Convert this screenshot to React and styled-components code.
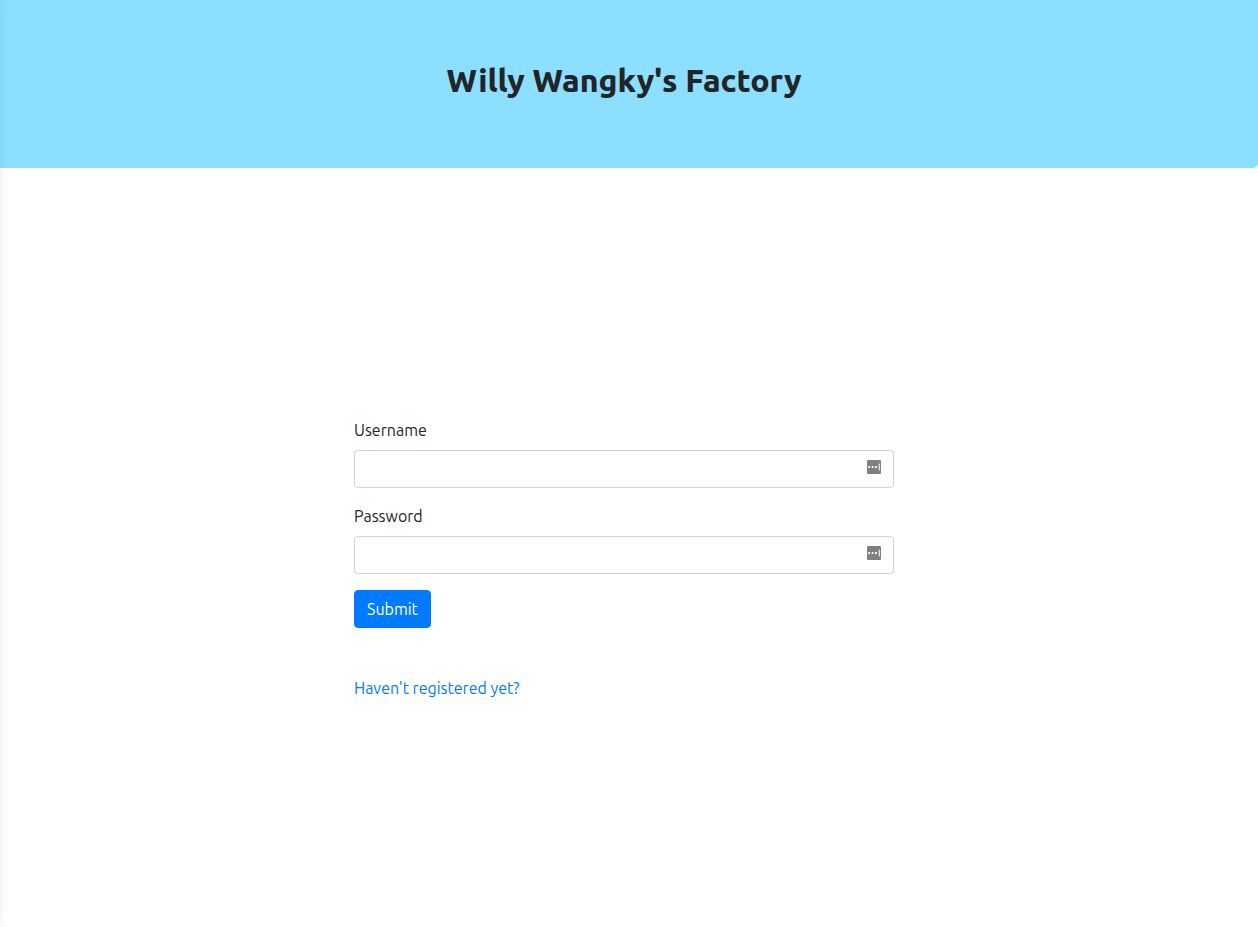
import React from "react";
import styled, { createGlobalStyle } from "styled-components";

const GlobalStyle = createGlobalStyle`
  *, *::before, *::after { box-sizing: border-box; }
  body {
    margin: 0;
    background: #fff;
    color: #212529;
    font-family: Ubuntu, "Noto Sans", sans-serif;
    font-size: 16px;
    line-height: 24px;
    overflow-x: hidden;
  }
`;

const Page = styled.div`
  min-height: 100vh;
  margin-left: -10px;
`;

const EdgeShadow = styled.div`
  position: fixed;
  top: 0;
  bottom: 0;
  left: -10px;
  width: 10px;
  box-shadow: 0 0 10px rgba(0, 0, 0, 0.08);
  pointer-events: none;
`;

const Banner = styled.header`
  padding: 60px 32px 68px;
  border-radius: 0 0 5px 5px;
  background: #8cdfff;
  text-align: center;
`;

const Title = styled.h1`
  margin: 0;
  font-size: 32px;
  font-weight: 800;
  line-height: 40px;
`;

const Main = styled.main`
  max-width: 540px;
  margin: 0 auto;
  padding: 250px 0 40px;
`;

const Field = styled.div`
  margin-bottom: 16px;
`;

const Label = styled.label`
  display: block;
  margin-bottom: 8px;
`;

const InputBox = styled.div`
  display: flex;
  align-items: center;
  height: 38px;
  padding-right: 12px;
  border: 1px solid #ced4da;
  border-radius: 4px;
  background: #fff;
`;

const Input = styled.input`
  flex: 1;
  min-width: 0;
  height: 36px;
  padding: 6px 12px;
  border: 0;
  outline: 0;
  background: transparent;
  color: #495057;
  font: inherit;
`;

const KeyIcon = styled.svg`
  flex: none;
  width: 14px;
  height: 14px;
  margin-bottom: 4px;
`;

const SubmitButton = styled.button`
  display: block;
  height: 38px;
  padding: 6px 12px;
  border: 1px solid #007bff;
  border-radius: 4px;
  background: #007bff;
  color: #fff;
  font: inherit;
  cursor: pointer;
`;

const RegisterLink = styled.a`
  display: inline-block;
  margin-top: 48px;
  color: #007bff;
  text-decoration: none;
`;

function TextField({ id, label, type }) {
  return (
    <Field>
      <Label htmlFor={id}>{label}</Label>
      <InputBox>
        <Input id={id} name={id} type={type} />
        <KeyIcon viewBox="0 0 14 14" aria-hidden="true">
          <rect width="14" height="14" rx="1.2" fill="#808080" />
          <g fill="#fff">
            <rect x="1.2" y="6" width="1.8" height="2" />
            <rect x="4.7" y="6" width="1.8" height="2" />
            <rect x="8.1" y="6" width="1.8" height="2" />
            <rect x="11.7" y="3.6" width="1.2" height="6.8" fillOpacity="0.85" />
          </g>
        </KeyIcon>
      </InputBox>
    </Field>
  );
}

export default function App() {
  return (
    <Page>
      <GlobalStyle />
      <Banner>
        <Title>Willy Wangky's Factory</Title>
      </Banner>
      <Main>
        <form onSubmit={(e) => e.preventDefault()}>
          <TextField id="username" label="Username" type="text" />
          <TextField id="password" label="Password" type="password" />
          <SubmitButton type="submit">Submit</SubmitButton>
        </form>
        <RegisterLink href="#register">Haven't registered yet?</RegisterLink>
      </Main>
      <EdgeShadow />
    </Page>
  );
}
